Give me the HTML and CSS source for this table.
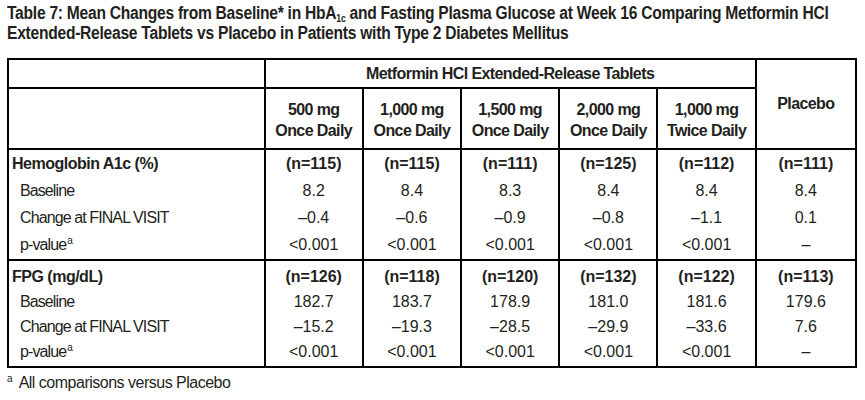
FILE: index.html
```html
<!DOCTYPE html>
<html>
<head>
<meta charset="utf-8">
<link rel="stylesheet" href="styles.css">
</head>
<body>
<div class="page">
  <h1 class="title"><span class="tl">Table 7: Mean Changes from Baseline* in HbA<sub>1c</sub> and Fasting Plasma Glucose at Week 16 Comparing Metformin HCl</span><br><span class="tl">Extended-Release Tablets vs Placebo in Patients with Type 2 Diabetes Mellitus</span></h1>
  <table class="data">
    <colgroup>
      <col class="c-label"><col class="c-dose"><col class="c-dose"><col class="c-dose"><col class="c-dose"><col class="c-dose"><col class="c-plac">
    </colgroup>
    <thead>
      <tr class="h1">
        <th></th>
        <th colspan="5" class="txt">Metformin HCl Extended-Release Tablets</th>
        <th rowspan="2" class="txt">Placebo</th>
      </tr>
      <tr class="h2">
        <th></th>
        <th class="txt">500 mg<br>Once Daily</th>
        <th class="txt">1,000 mg<br>Once Daily</th>
        <th class="txt">1,500 mg<br>Once Daily</th>
        <th class="txt">2,000 mg<br>Once Daily</th>
        <th class="txt">1,000 mg<br>Twice Daily</th>
      </tr>
    </thead>
    <tbody class="sec sec-a">
      <tr class="head-row"><td class="lbl">Hemoglobin A1c (%)</td><td>(n=115)</td><td>(n=115)</td><td>(n=111)</td><td>(n=125)</td><td>(n=112)</td><td>(n=111)</td></tr>
      <tr><td class="sub">Baseline</td><td>8.2</td><td>8.4</td><td>8.3</td><td>8.4</td><td>8.4</td><td>8.4</td></tr>
      <tr><td class="sub">Change at FINAL VISIT</td><td>–0.4</td><td>–0.6</td><td>–0.9</td><td>–0.8</td><td>–1.1</td><td>0.1</td></tr>
      <tr class="last"><td class="sub">p-value<sup>a</sup></td><td>&lt;0.001</td><td>&lt;0.001</td><td>&lt;0.001</td><td>&lt;0.001</td><td>&lt;0.001</td><td>–</td></tr>
    </tbody>
    <tbody class="sec sec-b">
      <tr class="head-row"><td class="lbl">FPG (mg/dL)</td><td>(n=126)</td><td>(n=118)</td><td>(n=120)</td><td>(n=132)</td><td>(n=122)</td><td>(n=113)</td></tr>
      <tr><td class="sub">Baseline</td><td>182.7</td><td>183.7</td><td>178.9</td><td>181.0</td><td>181.6</td><td>179.6</td></tr>
      <tr><td class="sub">Change at FINAL VISIT</td><td>–15.2</td><td>–19.3</td><td>–28.5</td><td>–29.9</td><td>–33.6</td><td>7.6</td></tr>
      <tr class="last"><td class="sub">p-value<sup>a</sup></td><td>&lt;0.001</td><td>&lt;0.001</td><td>&lt;0.001</td><td>&lt;0.001</td><td>&lt;0.001</td><td>–</td></tr>
    </tbody>
  </table>
  <p class="note"><sup>a</sup> All comparisons versus Placebo</p>
</div>
</body>
</html>
```

FILE: styles.css
```css
html, body {
  margin: 0;
  padding: 0;
  background: #ffffff;
}
body {
  font-family: "Liberation Sans", Arial, sans-serif;
  color: #231f20;
}
.page {
  padding: 3px 0 0 7px;
}
.title {
  margin: 0;
  font-size: 18px;
  line-height: 20px;
  font-weight: bold;
  white-space: nowrap;
  letter-spacing: -0.3px;
  transform: scaleX(0.867);
  transform-origin: left top;
}
.title sub {
  font-size: 10px;
  vertical-align: -3px;
  line-height: 0;
}
.data {
  margin-top: 15px;
  width: 850px;
  table-layout: fixed;
  border-collapse: collapse;
  border: 2px solid #000;
  font-size: 16px;
}
.c-label { width: 256px; }
.c-dose { width: 98px; }
.c-plac { width: 100px; }
.data th, .data td {
  border-left: 2px solid #000;
  border-right: 2px solid #000;
  padding: 0;
  text-align: center;
  white-space: nowrap;
}
.data th {
  font-weight: bold;
  border-bottom: 2px solid #000;
  border-top: 2px solid #000;
}
.data .txt { letter-spacing: -0.6px; }
.h1 th { height: 27px; }
.h2 th { height: 56px; line-height: 21px; padding-top: 3px; }
.sec td { height: 27px; line-height: 27px; }
.sec-b td { height: 25px; line-height: 25px; }
.sec .head-row td { font-weight: bold; }
.sec-a .last td { padding-bottom: 1px; }
.sec-b .head-row td { padding-top: 3px; }
.sec-b .last td { padding-bottom: 2px; }
.sec { border-top: 2px solid #000; }
.data td.lbl { text-align: left; padding-left: 3px; letter-spacing: -0.5px; }
.data td.sub { text-align: left; padding-left: 11px; letter-spacing: -0.9px; }
sup {
  font-size: 10px;
  line-height: 0;
  vertical-align: 6px;
  letter-spacing: 0;
  margin-left: 1px;
}
.note {
  margin: 6px 0 0 0;
  font-size: 16px;
  line-height: 18px;
  letter-spacing: -0.5px;
}
.note sup { margin-left: 0; margin-right: 3px; }
```
